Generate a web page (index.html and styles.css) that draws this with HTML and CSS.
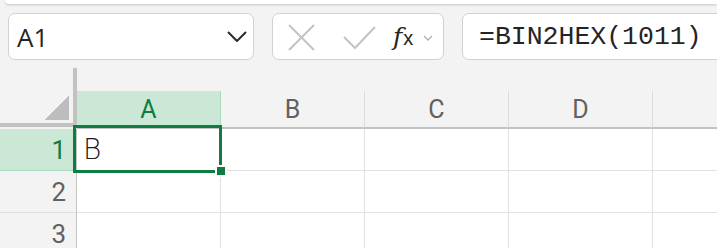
FILE: index.html
```html
<!DOCTYPE html>
<html lang="en">
<head>
    <meta charset="UTF-8">
    <title>Sheet</title>
    <link rel="stylesheet" href="styles.css">
</head>
<body>

<div class="ribbon-edge"></div>

<div class="toolbar">
    <div class="name-box">
        <span class="name-text">A1</span>
        <svg class="chevron" width="20" height="11" viewBox="0 0 20 11">
            <polyline points="1,1 10,10 19,1" fill="none" stroke="#2b2b2b" stroke-width="2"/>
        </svg>
    </div>

    <div class="fx-buttons">
        <svg class="icon-x" width="27" height="27" viewBox="0 0 27 27">
            <line x1="1" y1="1" x2="26" y2="26" stroke="#c3c3c3" stroke-width="2"/>
            <line x1="26" y1="1" x2="1" y2="26" stroke="#c3c3c3" stroke-width="2"/>
        </svg>
        <svg class="icon-check" width="33" height="24" viewBox="0 0 33 24">
            <polyline points="1,11 12,22 32,1" fill="none" stroke="#c3c3c3" stroke-width="2"/>
        </svg>
        <span class="fx"><span class="fx-f">f</span><span class="fx-x">x</span></span>
        <svg class="icon-more" width="10" height="6" viewBox="0 0 10 6">
            <polyline points="1,1 5,5 9,1" fill="none" stroke="#b0b0b0" stroke-width="1.3"/>
        </svg>
    </div>

    <div class="formula-box">=BIN2HEX(1011)</div>
</div>

<div class="sheet">
    <div class="head-row">
        <div class="corner"><span class="corner-tri"></span></div>
        <div class="col-head active">A</div>
        <div class="col-head">B</div>
        <div class="col-head">C</div>
        <div class="col-head">D</div>
        <div class="col-head"></div>
    </div>

    <div class="row active">
        <div class="row-head">1</div>
        <div class="cell value">B</div>
        <div class="cell"></div>
        <div class="cell"></div>
        <div class="cell"></div>
        <div class="cell"></div>
    </div>
    <div class="row">
        <div class="row-head">2</div>
        <div class="cell"></div>
        <div class="cell"></div>
        <div class="cell"></div>
        <div class="cell"></div>
        <div class="cell"></div>
    </div>
    <div class="row">
        <div class="row-head">3</div>
        <div class="cell"></div>
        <div class="cell"></div>
        <div class="cell"></div>
        <div class="cell"></div>
        <div class="cell"></div>
    </div>

    <div class="selection"><span class="fill-handle"></span></div>
</div>

</body>
</html>
```

FILE: styles.css
```css
body {
    margin: 0;
    background: #f3f3f3;
    font-family: Roboto, "Liberation Sans", sans-serif;
    overflow: hidden;
    width: 717px;
    height: 248px;
}
.ribbon-edge {
    height: 4px;
    margin-left: 5px;
    background: #fff;
    border-radius: 0 0 0 8px;
    box-shadow: 0 1px 3px rgba(0, 0, 0, 0.18);
}
.toolbar {
    display: flex;
    gap: 18px;
    padding: 9px 0 8px 8px;
    height: 47px;
    overflow: hidden;
}
.name-box, .fx-buttons, .formula-box {
    box-sizing: border-box;
    height: 47px;
    background: #fff;
    border: 1.5px solid #d1d1d1;
    border-radius: 7px;
    display: flex;
    align-items: center;
}
.name-box {
    width: 246px;
    flex: none;
    padding: 0 6px 0 8px;
    justify-content: space-between;
}
.name-text {
    font-family: "Open Sans", "Noto Sans", sans-serif;
    font-size: 26px;
    color: #242424;
}
.fx-buttons {
    width: 172px;
    flex: none;
    padding-left: 15px;
}
.icon-x {
    margin-top: 1px;
}
.icon-check {
    margin-left: 28px;
    margin-top: 2px;
}
.fx {
    margin-left: 17px;
    color: #242424;
    display: flex;
    align-items: baseline;
}
.fx-f {
    font-family: "DejaVu Serif", serif;
    font-style: italic;
    font-size: 25px;
}
.fx-x {
    font-family: "Liberation Sans", sans-serif;
    font-size: 20px;
    margin-left: 1px;
}
.icon-more {
    margin-left: 10px;
    margin-top: 2px;
}
.formula-box {
    width: 300px;
    flex: none;
    padding-left: 16px;
    font-family: "Liberation Mono", monospace;
    font-size: 26.5px;
    color: #242424;
}

.sheet {
    position: relative;
    overflow: hidden;
}
.head-row {
    display: flex;
    height: 61px;
    align-items: flex-end;
}
.corner {
    flex: none;
    align-self: flex-start;
    width: 73px;
    height: 54px;
    padding-top: 1px;
    border-right: 4px solid #c2c2c2;
    border-bottom: 4px solid #c2c2c2;
    box-sizing: content-box;
    display: flex;
    justify-content: flex-end;
    align-items: flex-end;
}
.corner-tri {
    width: 24px;
    height: 24px;
    margin: 0 4px 3px 0;
    background: linear-gradient(to bottom right, transparent 50%, #bdbdbd 50%);
}
.col-head {
    flex: none;
    width: 143px;
    height: 36px;
    border-right: 1px solid #dcdcdc;
    border-bottom: 2px solid #c2c2c2;
    display: flex;
    align-items: center;
    justify-content: center;
    font-size: 25px;
    color: #616161;
}
.col-head.active {
    background: #cae8d5;
    color: #107c41;
    border-right-color: #a8dbbb;
}
.row {
    display: flex;
    height: 42px;
}
.row-head {
    flex: none;
    width: 77px;
    box-sizing: border-box;
    padding-right: 10px;
    border-right: 1px solid #c2c2c2;
    border-bottom: 1px solid #e1e1e1;
    display: flex;
    align-items: center;
    justify-content: flex-end;
    font-size: 26px;
    color: #616161;
}
.row.active .row-head {
    background: #cae8d5;
    color: #107c41;
    border-bottom-color: #a8dbbb;
}
.cell {
    flex: none;
    width: 143px;
    background: #fff;
    border-right: 1px solid #e1e1e1;
    border-bottom: 1px solid #e1e1e1;
}
.cell.value {
    display: flex;
    align-items: center;
    padding-left: 6px;
    width: 137px;
    font-family: "DejaVu Sans", sans-serif;
    font-weight: 200;
    font-size: 28px;
    color: #2a1620;
}
.selection {
    position: absolute;
    left: 73px;
    top: 57px;
    width: 143px;
    height: 42px;
    border: 3px solid #107c41;
}
.fill-handle {
    position: absolute;
    left: 141px;
    top: 39px;
    width: 8px;
    height: 8px;
    background: #107c41;
    box-shadow: 0 0 0 2px #fff;
}
```
